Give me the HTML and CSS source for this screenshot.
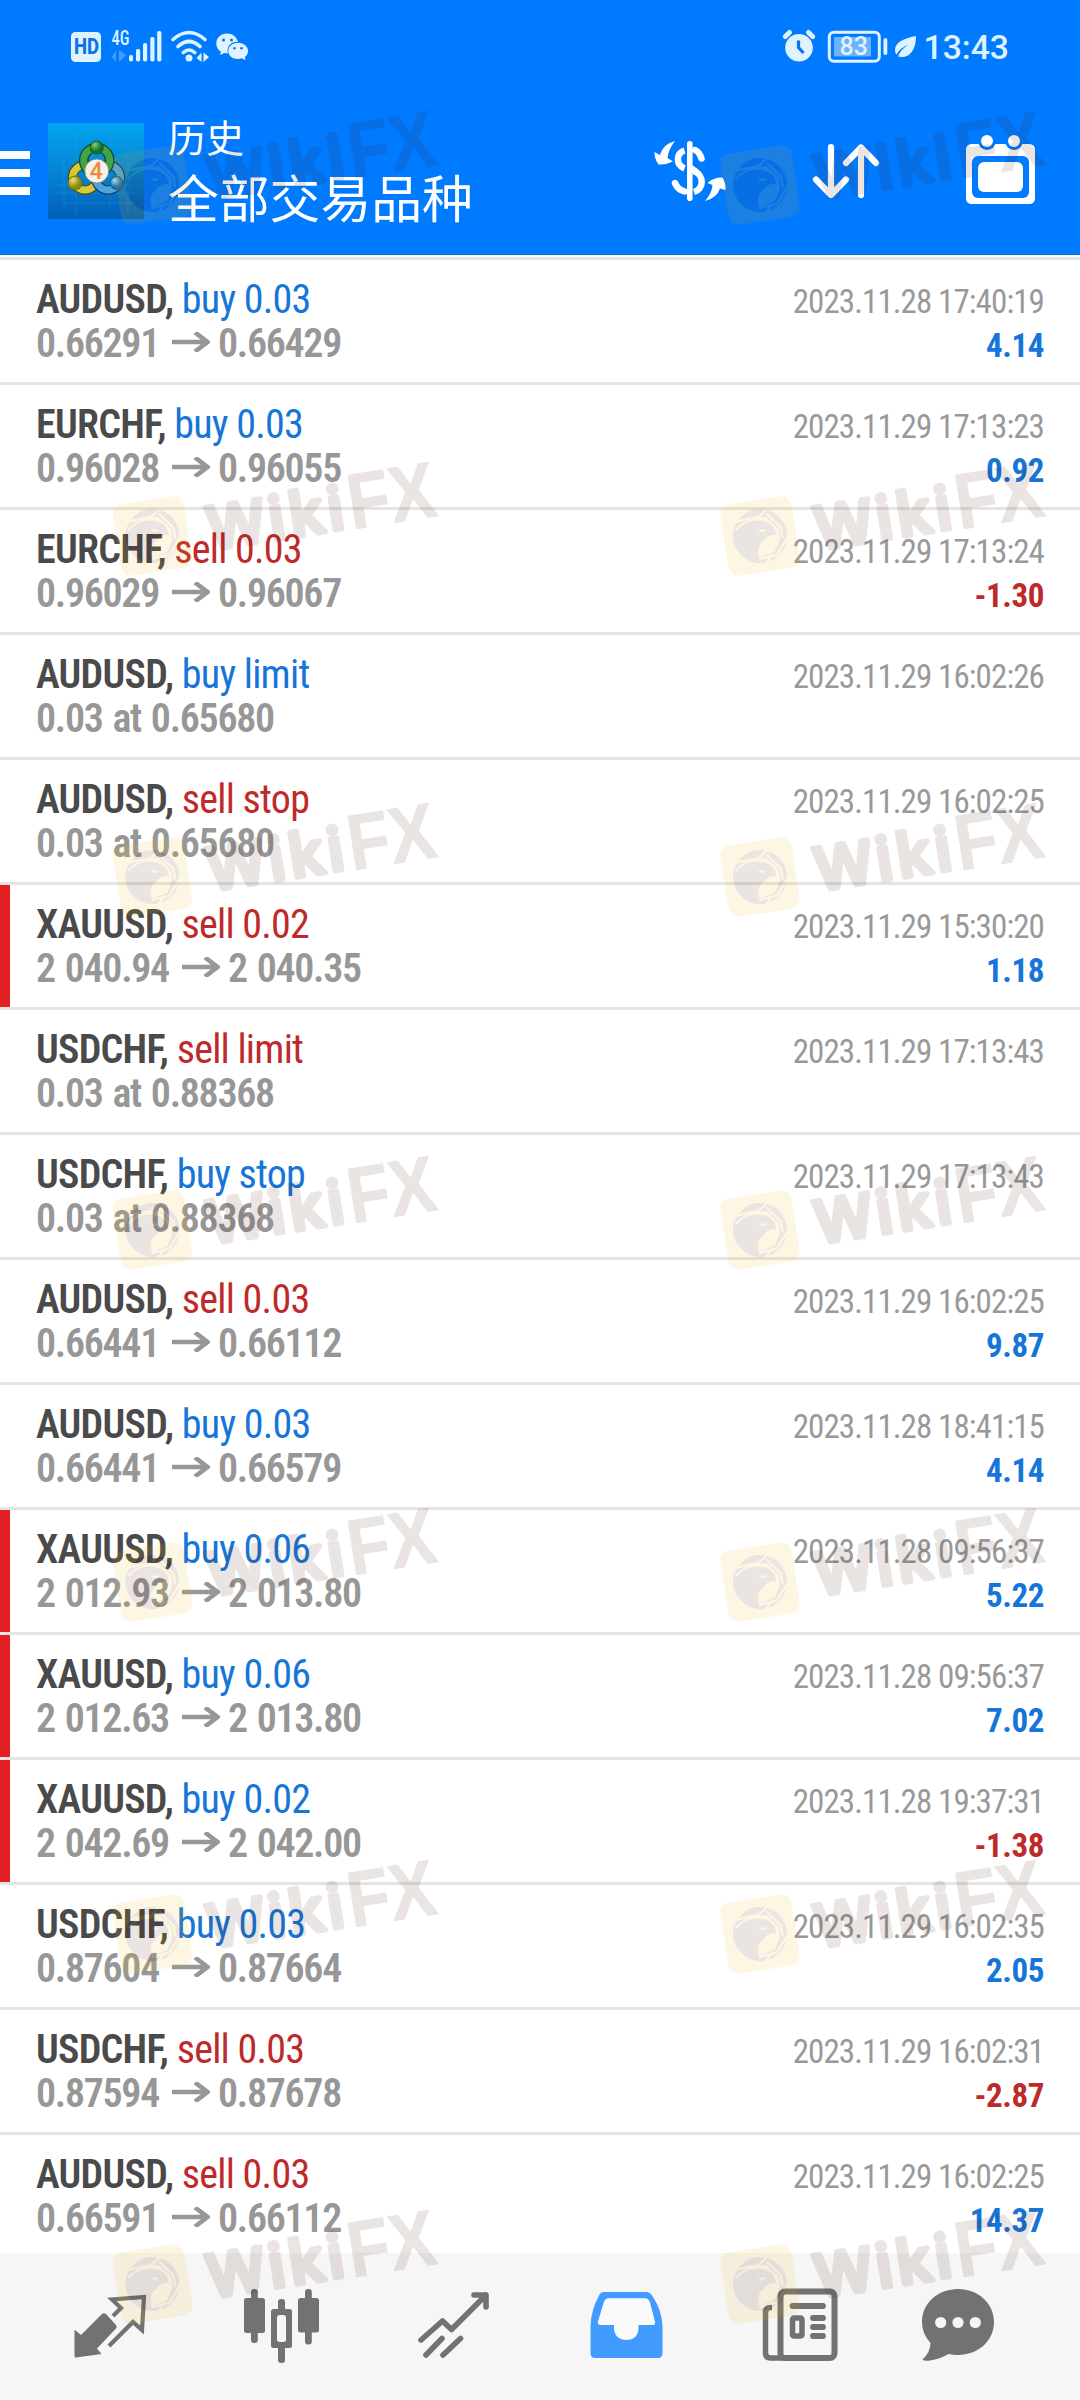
FILE: index.html
```
<!DOCTYPE html>
<html lang="zh-CN">
<head>
<meta charset="utf-8">
<title>历史</title>
<link rel="stylesheet" href="styles.css">
</head>
<body>
<svg width="0" height="0" class="defs">
  <defs>
    <symbol id="arrow" viewBox="0 0 38 20"><path d="M0 10H35M23 .5L35.5 10L23 19.5" fill="none" stroke="#979797" stroke-width="4.6"/></symbol>
    <g id="wm" opacity=".11">
      <g transform="rotate(-9)">
        <rect x="-36" y="-36" width="72" height="72" rx="10" fill="#f0b400"/>
        <circle r="27" fill="#46140a"/>
        <path d="M-24 -18L2 -19L13 -27M10 -21L22 -5L22 6M28 4L14 21L-6 23M9 20L2 28" fill="none" stroke="#f0b400" stroke-width="2.400"/>
        <path d="M-24 -10C-16 -17 -8 -18 1 -18L9 -18L20 -4L19 7L12 18L-6 22C-8 15 -4 8 4 5Z" fill="#f0b400"/>
        <path d="M-27 -4C-19 -14 -8 -18 2 -15C11 -13 17 -7 16 2C12 0 8 1 4 4C-3 8 -6 14 -4 24C-12 22 -16 17 -17 13L-20 13L-20 9L-25 8L-23 4L-27 2L-25 0Z" fill="#46140a"/>
        <path d="M-1 -7L8 -5Q4 -2 0 -5Z" fill="#f0b400"/>
      </g>
      <g transform="translate(76 13) rotate(-9)" fill="#46140a" stroke="#46140a" stroke-linejoin="round">
        <text class="wm-a" x="-17" y="-2" textLength="137" lengthAdjust="spacing" stroke-width="5">Wiki</text>
        <text class="wm-b" x="125" y="0" textLength="88" lengthAdjust="spacingAndGlyphs">FX</text>
      </g>
    </g>
    <linearGradient id="lg" x1="0" y1="0" x2="0" y2="1"><stop offset="0" stop-color="#03a4ee"/><stop offset=".45" stop-color="#0488d8"/><stop offset="1" stop-color="#025fb8"/></linearGradient>
    <radialGradient id="gg" cx=".35" cy=".3"><stop offset="0" stop-color="#7ccf6b"/><stop offset="1" stop-color="#14722d"/></radialGradient>
    <radialGradient id="gy" cx=".35" cy=".3"><stop offset="0" stop-color="#f2e36a"/><stop offset="1" stop-color="#8d8a10"/></radialGradient>
    <radialGradient id="gb" cx=".35" cy=".3"><stop offset="0" stop-color="#a5dcf5"/><stop offset="1" stop-color="#1a6fae"/></radialGradient>
  </defs>
</svg>
<div class="screen">
<header class="top">
  <div class="status">
    <svg class="st-left" viewBox="60 20 200 54" width="200" height="54" fill="#dff2ff">
      <rect x="71" y="32" width="30" height="30" rx="4.5"/>
      <text x="74" y="54.3" class="hd" textLength="25" lengthAdjust="spacingAndGlyphs">HD</text>
      <text x="111.500" y="45" class="g4" textLength="18" lengthAdjust="spacingAndGlyphs">4G</text>
      <path d="M112 57L116 50V62M119 50V62L126 55" opacity=".3"/>
      <g><rect x="129" y="55" width="4" height="6.500" rx="1.800"/><rect x="136" y="49" width="4.200" height="12.500" rx="1.800"/><rect x="143" y="43" width="4.200" height="18.500" rx="1.800"/><rect x="150.300" y="37" width="4.200" height="24.500" rx="1.800"/><rect x="157.200" y="31" width="4.200" height="30.500" rx="1.800"/></g>
      <circle cx="189" cy="58" r="3.500"/>
      <g fill="none" stroke="#dff2ff" stroke-width="3.600" stroke-linecap="round"><path d="M173 39.500Q189 25.500 205 39.500"/><path d="M178 46.500Q189 36.500 200 46.500"/><path d="M183.300 52.500Q189 47.500 194.700 52.500"/></g>
      <path d="M196.500 58L201.500 52.500V62M203.500 52.500V62L209 57"/>
      <path d="M227 33.500C220.500 33.500 216.300 38 216.300 43.500C216.300 47 218 50 221 51.800L220 55L224.500 53Q226.500 53.500 228 53.300C226 46.500 231 41.500 238 41.800C236.500 36.800 232.500 33.500 227 33.500Z"/>
      <path d="M238 42.800C232 42.800 228.300 46.500 228.300 51C228.300 55.500 232.300 59 238 59Q240 59 242 58.300L245.500 60.300L244.800 57C247 55.500 248 53.300 248 51C248 46.500 243.800 42.800 238 42.800Z"/>
      <g fill="#0a74e8"><circle cx="223.500" cy="40" r="1.500"/><circle cx="231.500" cy="40" r="1.500"/><circle cx="234.500" cy="48.300" r="1.300"/><circle cx="241.500" cy="48.300" r="1.300"/></g>
    </svg>
    <svg class="st-right" viewBox="775 20 240 54" width="240" height="54" fill="#dff2ff">
      <circle cx="799" cy="47.800" r="13.800"/>
      <path d="M785.300 36.500L789.500 32.500M808.500 32.500L812.700 36.500" stroke="#dff2ff" stroke-width="5" stroke-linecap="round"/>
      <path d="M798.500 40.500V47.500L803.500 53" fill="none" stroke="#0a74e8" stroke-width="3.200"/>
      <rect x="829.300" y="32.200" width="50" height="29" rx="4.500" fill="none" stroke="#dff2ff" stroke-width="3"/>
      <rect x="834" y="37" width="37" height="19.500" fill="#6db2ff"/>
      <rect x="883.500" y="38" width="3.800" height="17" rx="1.900"/>
      <text x="839.500" y="55" class="bat">83</text>
      <path d="M916 36C905 38 895 42 895 50Q895 53 896.500 54.500Q900 48 908.500 44.500Q900 50 898 56.500C908 59 916 52 916 36Z"/>
      <text x="923.500" y="59.300" class="time" textLength="85.500" lengthAdjust="spacingAndGlyphs">13:43</text>
    </svg>
  </div>
  <div class="bar">
    <svg class="burger" viewBox="0 0 30 44" width="30" height="44"><path d="M0 4H30M0 22H30M0 40H30" stroke="#fff" stroke-width="8"/></svg>
    <svg class="logo" viewBox="0 0 96 96" width="96" height="96">
      <rect width="96" height="96" fill="url(#lg)"/>
      <path d="M16 20V88M28 10V92M62 6V88M80 30V90M8 70H90M16 80H88M10 62H86" stroke="#4db4ee" stroke-width=".6" opacity=".35"/>
      <g fill="none">
        <circle cx="37" cy="54.500" r="12.500" stroke="#4e500c" stroke-width="9.500"/><circle cx="37" cy="54.500" r="12.500" stroke="#d7c93a" stroke-width="7"/>
        <circle cx="60" cy="54.500" r="12.500" stroke="#0a3f74" stroke-width="9.500"/><circle cx="60" cy="54.500" r="12.500" stroke="#4ea4d8" stroke-width="7"/>
        <circle cx="48.700" cy="37.500" r="13" stroke="#0c4e24" stroke-width="9.500"/><circle cx="48.700" cy="37.500" r="13" stroke="#43a347" stroke-width="7"/>
      </g>
      <circle cx="48.700" cy="24.500" r="6.500" fill="url(#gg)" stroke="#0c5a25"/>
      <circle cx="27" cy="60" r="7" fill="url(#gy)" stroke="#6b6a10"/>
      <circle cx="68.700" cy="60" r="6.500" fill="url(#gb)" stroke="#145a90"/>
      <circle cx="48.700" cy="48" r="12" fill="#f3f1ea" stroke="#77805a" stroke-width=".8"/>
      <text x="48.200" y="56" text-anchor="middle" class="four">4</text>
    </svg>
    <div class="titles"><div class="t1">历史</div><div class="t2">全部交易品种</div></div>
    <svg class="actions" viewBox="650 125 400 90" width="400" height="90" fill="#fff">
      <rect x="687" y="141" width="5.600" height="60" rx="2.800"/>
      <g fill="none" stroke="#fff" stroke-width="6.500">
        <path d="M684.500 150.500C676.500 153 675 164.500 684.500 168.500"/>
        <path d="M695 150Q699 151.500 701.500 158.500" stroke-linecap="round"/>
        <path d="M694 171.500C704 174.500 704.500 189 694 192"/>
        <path d="M675 183Q677.500 189.500 684.500 191.500" stroke-linecap="round"/>
        <path d="M691 168L697 172.500"/>
      </g>
      <path d="M675 141Q663 144 660 155L654.500 152Q654 158 658.500 164.500Q666 165 673 161.500L667.500 158Q668.500 149 675 141Z"/>
      <path d="M705 201Q712 193 712.500 185L707.500 183Q714 177 722.500 177.500Q726 183 725.500 190L720 188.500Q717 198 705 201Z"/>
      <g fill="none" stroke="#fff" stroke-width="6.200" stroke-linecap="round" stroke-linejoin="round">
        <path d="M831 147V194M816 179.500L831 195L846 179.500"/><path d="M861 195V148M846 163L861 147.500L876 163"/>
      </g>
      <rect x="966" y="144" width="69" height="60" rx="5.500"/>
      <g fill="#007aff"><circle cx="987" cy="141" r="9"/><circle cx="1014" cy="141" r="9"/><rect x="972" y="156" width="57" height="42" rx="6"/></g>
      <circle cx="987" cy="141" r="6"/><circle cx="1014" cy="141" r="6"/><rect x="978" y="162" width="45" height="30" rx="6"/>
    </svg>
  </div>
</header>
<main class="list">
  <div class="row"><div class="l"><p><b>AUDUSD,</b> <span class="buy">buy 0.03</span></p><p class="px">0.66291<svg class="ar"><use href="#arrow"/></svg>0.66429</p></div><div class="r"><p>2023.11.28 17:40:19</p><p class="pos">4.14</p></div></div>
  <div class="row"><div class="l"><p><b>EURCHF,</b> <span class="buy">buy 0.03</span></p><p class="px">0.96028<svg class="ar"><use href="#arrow"/></svg>0.96055</p></div><div class="r"><p>2023.11.29 17:13:23</p><p class="pos">0.92</p></div></div>
  <div class="row"><div class="l"><p><b>EURCHF,</b> <span class="sell">sell 0.03</span></p><p class="px">0.96029<svg class="ar"><use href="#arrow"/></svg>0.96067</p></div><div class="r"><p>2023.11.29 17:13:24</p><p class="neg">-1.30</p></div></div>
  <div class="row"><div class="l"><p><b>AUDUSD,</b> <span class="buy">buy limit</span></p><p class="px">0.03 at 0.65680</p></div><div class="r"><p>2023.11.29 16:02:26</p></div></div>
  <div class="row"><div class="l"><p><b>AUDUSD,</b> <span class="sell">sell stop</span></p><p class="px">0.03 at 0.65680</p></div><div class="r"><p>2023.11.29 16:02:25</p></div></div>
  <div class="row mark"><div class="l"><p><b>XAUUSD,</b> <span class="sell">sell 0.02</span></p><p class="px">2 040.94<svg class="ar"><use href="#arrow"/></svg>2 040.35</p></div><div class="r"><p>2023.11.29 15:30:20</p><p class="pos">1.18</p></div></div>
  <div class="row"><div class="l"><p><b>USDCHF,</b> <span class="sell">sell limit</span></p><p class="px">0.03 at 0.88368</p></div><div class="r"><p>2023.11.29 17:13:43</p></div></div>
  <div class="row"><div class="l"><p><b>USDCHF,</b> <span class="buy">buy stop</span></p><p class="px">0.03 at 0.88368</p></div><div class="r"><p>2023.11.29 17:13:43</p></div></div>
  <div class="row"><div class="l"><p><b>AUDUSD,</b> <span class="sell">sell 0.03</span></p><p class="px">0.66441<svg class="ar"><use href="#arrow"/></svg>0.66112</p></div><div class="r"><p>2023.11.29 16:02:25</p><p class="pos">9.87</p></div></div>
  <div class="row"><div class="l"><p><b>AUDUSD,</b> <span class="buy">buy 0.03</span></p><p class="px">0.66441<svg class="ar"><use href="#arrow"/></svg>0.66579</p></div><div class="r"><p>2023.11.28 18:41:15</p><p class="pos">4.14</p></div></div>
  <div class="row mark"><div class="l"><p><b>XAUUSD,</b> <span class="buy">buy 0.06</span></p><p class="px">2 012.93<svg class="ar"><use href="#arrow"/></svg>2 013.80</p></div><div class="r"><p>2023.11.28 09:56:37</p><p class="pos">5.22</p></div></div>
  <div class="row mark"><div class="l"><p><b>XAUUSD,</b> <span class="buy">buy 0.06</span></p><p class="px">2 012.63<svg class="ar"><use href="#arrow"/></svg>2 013.80</p></div><div class="r"><p>2023.11.28 09:56:37</p><p class="pos">7.02</p></div></div>
  <div class="row mark"><div class="l"><p><b>XAUUSD,</b> <span class="buy">buy 0.02</span></p><p class="px">2 042.69<svg class="ar"><use href="#arrow"/></svg>2 042.00</p></div><div class="r"><p>2023.11.28 19:37:31</p><p class="neg">-1.38</p></div></div>
  <div class="row"><div class="l"><p><b>USDCHF,</b> <span class="buy">buy 0.03</span></p><p class="px">0.87604<svg class="ar"><use href="#arrow"/></svg>0.87664</p></div><div class="r"><p>2023.11.29 16:02:35</p><p class="pos">2.05</p></div></div>
  <div class="row"><div class="l"><p><b>USDCHF,</b> <span class="sell">sell 0.03</span></p><p class="px">0.87594<svg class="ar"><use href="#arrow"/></svg>0.87678</p></div><div class="r"><p>2023.11.29 16:02:31</p><p class="neg">-2.87</p></div></div>
  <div class="row"><div class="l"><p><b>AUDUSD,</b> <span class="sell">sell 0.03</span></p><p class="px">0.66591<svg class="ar"><use href="#arrow"/></svg>0.66112</p></div><div class="r"><p>2023.11.29 16:02:25</p><p class="pos">14.37</p></div></div>
</main>
<nav class="tabs">
  <svg viewBox="50 2280 120 90" fill="#727272">
    <path d="M75 2330L81 2335L102 2314Q104 2312.500 106 2314L116 2325Q117.500 2327 116 2328.500L97 2348.500L101.500 2354L76 2357.500Q74.500 2357.500 74.500 2356V2330Z"/>
    <path d="M113 2316L121 2308L112 2299.500L144 2297L142 2330L133 2322L109 2346" fill="none" stroke="#727272" stroke-width="4.200"/>
  </svg>
  <svg viewBox="222 2280 120 90" fill="#727272">
    <rect x="251" y="2289" width="6.800" height="54" rx="3"/><rect x="244" y="2298" width="21" height="35" rx="2.500"/>
    <rect x="305" y="2289" width="6.800" height="55.500" rx="3"/><rect x="298" y="2298" width="21" height="34.500" rx="2.500"/>
    <rect x="278" y="2299" width="7" height="64" rx="3"/><rect x="271" y="2309" width="21" height="39" rx="2.500"/><rect x="277" y="2315" width="9" height="27" rx="2.500" fill="#f6f6f6"/>
  </svg>
  <svg viewBox="394 2280 120 90" fill="none" stroke="#727272" stroke-width="5.600" stroke-linecap="round" stroke-linejoin="round">
    <path d="M421 2340L442.500 2321L451.500 2329.500L486 2295M474 2295H486V2307M426 2355L442 2338.500M443 2355L460.500 2338.500"/>
  </svg>
  <svg viewBox="566 2280 120 90" fill="#429cff">
    <path fill="#f9fafa" d="M604 2296H649L657 2327L640 2342H614L596 2327Z"/>
    <path fill-rule="evenodd" d="M602 2292H646Q650 2292 652 2295.500Q662 2310 662.500 2326V2353Q662.500 2358 658 2358H595Q590.500 2358 590.500 2353V2326Q591 2310 599 2295.500Q600.500 2292 604 2292ZM608 2298.300Q605.500 2298.300 604 2301.500L598 2321.500Q597.500 2325 600.500 2325H614V2328C614 2336 619.500 2340 626.500 2340C633.500 2340 638.500 2336 638.500 2328V2325H653Q655.500 2325 655 2321.500L650 2302.500Q648.500 2298.300 645 2298.300Z"/>
  </svg>
  <svg viewBox="738 2280 120 90" fill="none" stroke="#727272">
    <rect x="780.500" y="2291.500" width="54" height="66.500" rx="4.500" stroke-width="6"/>
    <path d="M772 2307.500H770.500Q765.500 2307.500 765.500 2312.500V2353Q765.500 2358 770.500 2358H786" stroke-width="5.500"/>
    <path d="M792.500 2306H823M813 2318H823M813 2327H823M813 2336H823" stroke-width="5.800" stroke-linecap="round"/>
    <rect x="792.500" y="2318" width="9.500" height="18" rx="1.500" stroke-width="5.500"/>
  </svg>
  <svg viewBox="910 2280 120 90" fill="#727272">
    <path d="M958 2289C938 2289 922 2303 922 2322Q922 2334 930.500 2343Q930.500 2352 922.500 2359.500Q924 2361.500 930 2360.500Q940 2359 948.500 2354Q953 2355 958 2355C978 2355 994 2341 994 2322C994 2303 978 2289 958 2289Z"/>
    <g fill="#f6f6f6"><circle cx="940.700" cy="2322.500" r="5.600"/><circle cx="958" cy="2322.500" r="5.600"/><circle cx="975.300" cy="2322.500" r="5.600"/></g>
  </svg>
</nav>
<svg class="overlay" viewBox="0 0 1080 2400">
  <g id="pair"><use href="#wm" x="152.500" y="185"/><use href="#wm" x="760" y="185"/></g>
  <use href="#pair" y="351"/><use href="#pair" y="692"/><use href="#pair" y="1045"/><use href="#pair" y="1397"/><use href="#pair" y="1749"/><use href="#pair" y="2099"/>
</svg>
</div>
</body>
</html>
```
FILE: styles.css
```
* { box-sizing: border-box; margin: 0; padding: 0; }
body { background: #fff; }
.defs { display: block; }
.screen { position: relative; width: 1080px; height: 2400px; display: flex; flex-direction: column; overflow: hidden; font-family: "Roboto Condensed", Roboto, "Liberation Sans", sans-serif; }
.top { flex: none; height: 260px; background: #007aff; border-bottom: 3px solid #e4e4e4; box-shadow: inset 0 -2px 0 #f6ffff, inset 0 -3px 0 #1a69ba; }
.status { display: flex; justify-content: space-between; padding: 20px 65px 0 60px; height: 74px; }
.bar { display: flex; align-items: flex-start; padding-right: 30px; }
.burger { margin-top: 77px; }
.logo { margin: 49px 0 0 18px; }
.titles { margin: 35px 0 0 24px; color: #fff; font-family: "Noto Sans CJK SC", sans-serif; white-space: nowrap; }
.t1 { font-size: 38px; line-height: 54px; }
.t2 { font-size: 50.800px; line-height: 67px; }
.actions { margin: 51px 0 0 auto; }
.hd { font: 800 22px Roboto, sans-serif; fill: #0a74e8; }
.g4 { font: 500 21px "Roboto Condensed", Roboto, sans-serif; }
.bat { font: 500 25px Roboto, sans-serif; }
.time { font: 500 34px Roboto, sans-serif; }
.four { font: 500 23px Roboto, sans-serif; fill: #ee8a3c; }
.wm-a { font: 600 60px "Open Sans", sans-serif; }
.wm-b { font: 700 79px "Liberation Sans", sans-serif; }
.list { flex: 1; min-height: 0; overflow: hidden; }
.row { display: flex; justify-content: space-between; height: 125px; padding: 18px 36px 0; border-bottom: 3px solid #e4e4e4; white-space: nowrap; }
.mark { box-shadow: inset 10px 0 0 #e21f22; }
.l { font-size: 40px; line-height: 44px; letter-spacing: -0.750px; }
.l b { font-weight: 600; color: #4a4a4a; }
.px { color: #979797; font-weight: 600; letter-spacing: -1.300px; word-spacing: 2px; }
.ar { width: 38px; height: 20px; margin: 0 8px 0 13px; vertical-align: 5px; }
.r { padding-top: 2px; font-size: 33px; line-height: 44px; font-weight: 400; letter-spacing: -0.900px; text-align: right; color: #999; }
.pos, .neg { font-weight: 700; letter-spacing: -0.400px; }
.buy, .pos { color: #1675d8; }
.sell, .neg { color: #be2a2a; }
.tabs { flex: none; height: 147px; padding: 27px 24px 0; background: #f6f6f6; display: grid; grid-template-columns: repeat(6, 1fr); justify-items: center; align-items: start; }
.tabs svg { width: 120px; height: 90px; }
.overlay { position: absolute; inset: 0; width: 1080px; height: 2400px; pointer-events: none; }
```
